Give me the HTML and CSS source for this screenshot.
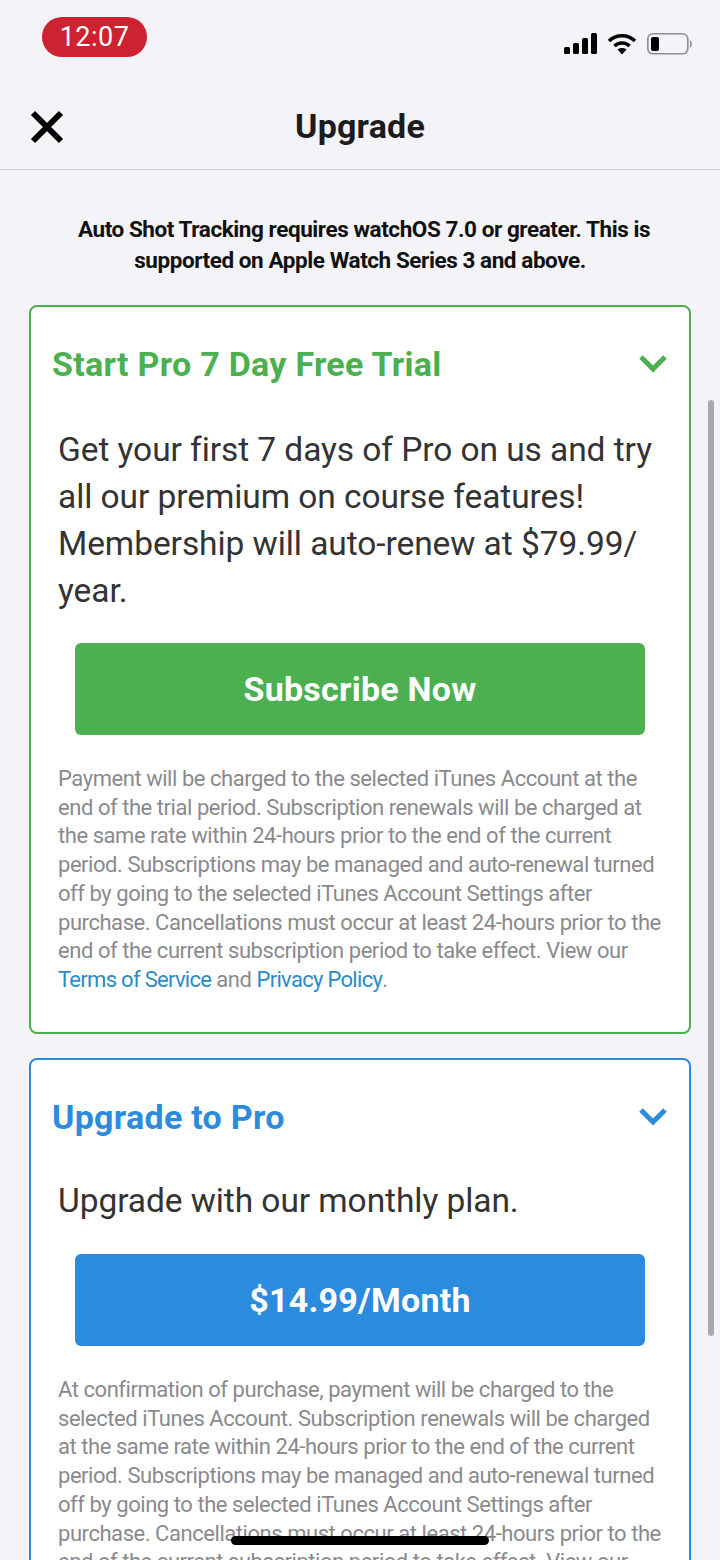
FILE: index.html
```html
<!DOCTYPE html>
<html>
<head>
  <title>Upgrade</title>
  <link rel="stylesheet" href="styles.css">
</head>
<body>
  <div class="status-bar">
    <span class="time">12:07</span>
    <div class="status-icons">
      <svg width="33" height="22" viewBox="0 0 33 22"><rect x="0" y="14" width="6" height="7" rx="1.5"/><rect x="9" y="10" width="6" height="11" rx="1.5"/><rect x="18" y="5" width="6" height="16" rx="1.5"/><rect x="27" y="0" width="6" height="21" rx="1.500"/></svg>
      <svg width="30" height="22" viewBox="0 0 30 22"><path class="wifi" d="M2 8 C9 1 21 1 28 8"/><path class="wifi" d="M7.500 13 C11.500 9 18.500 9 22.500 13"/><path d="M15 21.500 L10.500 16.500 C13 14.500 17 14.500 19.500 16.500 Z"/></svg>
      <svg width="45" height="22" viewBox="0 0 45 22"><rect class="batt" x="0.800" y="0.800" width="40" height="20" rx="5"/><rect x="4" y="4" width="8" height="14" rx="2"/><path class="batt-cap" d="M43 8 C44.500 9 44.500 13 43 14"/></svg>
    </div>
  </div>

  <header class="top-bar">
    <svg class="close-icon" width="34" height="34" viewBox="0 0 34 34"><path d="M3 3 L31 31 M31 3 L3 31"/></svg>
    <h1>Upgrade</h1>
  </header>

  <main class="content">
    <p class="intro"><span class="intro-first">Auto Shot Tracking requires watchOS 7.0 or greater. This is</span><br>supported on Apple Watch Series 3 and above.</p>

    <section class="card card-green">
      <div class="card-head">
        <h2>Start Pro 7 Day Free Trial</h2>
        <svg class="chevron" width="30" height="20" viewBox="0 0 30 20"><path d="M3 3 L15 15 L27 3"/></svg>
      </div>
      <p class="lead">Get your first 7 days of Pro on us and try<br>all our premium on course features!<br>Membership will auto-renew at $79.99/<br>year.</p>
      <button class="cta">Subscribe Now</button>
      <p class="fine">Payment will be charged to the selected iTunes Account at the<br>end of the trial period. Subscription renewals will be charged at<br>the same rate within 24-hours prior to the end of the current<br>period. Subscriptions may be managed and auto-renewal turned<br>off by going to the selected iTunes Account Settings after<br>purchase. Cancellations must occur at least 24-hours prior to the<br>end of the current subscription period to take effect. View our<br><a>Terms of Service</a> and <a>Privacy Policy</a>.</p>
    </section>

    <section class="card card-blue">
      <div class="card-head">
        <h2>Upgrade to Pro</h2>
        <svg class="chevron" width="30" height="20" viewBox="0 0 30 20"><path d="M3 3 L15 15 L27 3"/></svg>
      </div>
      <p class="lead">Upgrade with our monthly plan.</p>
      <button class="cta">$14.99/Month</button>
      <p class="fine">At confirmation of purchase, payment will be charged to the<br>selected iTunes Account. Subscription renewals will be charged<br>at the same rate within 24-hours prior to the end of the current<br>period. Subscriptions may be managed and auto-renewal turned<br>off by going to the selected iTunes Account Settings after<br>purchase. Cancellations must occur at least 24-hours prior to the<br>end of the current subscription period to take effect. View our</p>
    </section>
  </main>

  <div class="scrollbar"></div>
  <div class="home-bar"></div>
</body>
</html>
```

FILE: styles.css
```css
html, body {
  margin: 0;
  height: 1560px;
  overflow: hidden;
}
body {
  position: relative;
  font-family: "Roboto", "Noto Sans", sans-serif;
  background-color: #f4f3f8;
  color: #1c1c1e;
}
.status-bar {
  height: 85px;
  display: flex;
  justify-content: space-between;
  align-items: flex-start;
  padding: 17px 28px 0 42px;
  box-sizing: border-box;
}
.time {
  width: 105px;
  height: 40px;
  line-height: 40px;
  text-align: center;
  border-radius: 20px;
  background-color: #cf2230;
  color: #fff;
  font-size: 27px;
  letter-spacing: 0.5px;
}
.status-icons {
  display: flex;
  gap: 10px;
  margin-top: 16px;
  fill: #000;
}
.wifi {
  fill: none;
  stroke: #000;
  stroke-width: 3.5;
}
.batt {
  fill: none;
  stroke: #8e8e93;
  stroke-width: 1.6;
}
.batt-cap {
  fill: none;
  stroke: #8e8e93;
  stroke-width: 1.6;
}
.top-bar {
  height: 84px;
  display: flex;
  align-items: center;
  justify-content: center;
  position: relative;
  border-bottom: 1px solid #cfcfd4;
}
.top-bar h1 {
  margin: 0 0 2px;
  font-size: 34px;
  font-weight: 700;
  letter-spacing: 0.2px;
}
.close-icon {
  position: absolute;
  left: 30px;
  top: 25px;
  fill: none;
  stroke: #000;
  stroke-width: 6;
}
.content {
  padding: 0 29px;
}
.intro {
  margin: 44px 0 29px;
  font-size: 22.500px;
  line-height: 31px;
  font-weight: 700;
  letter-spacing: -0.43px;
  text-align: center;
  color: #111;
}
.intro-first {
  margin-left: 8px;
}
.card {
  background-color: #fff;
  border: 2px solid;
  border-radius: 8px;
  padding: 0 21px 0 27px;
  margin-bottom: 24px;
}
.card-green {
  height: 725px;
  border-color: #4caf50;
}
.card-blue {
  border-color: #2b8bdc;
}
.card-green h2,
.card-green .chevron {
  color: #4caf50;
  stroke: #4caf50;
}
.card-blue h2,
.card-blue .chevron {
  color: #2b8bdc;
  stroke: #2b8bdc;
}
.card-head {
  display: flex;
  justify-content: space-between;
  align-items: center;
  height: 113px;
  margin-left: -6px;
}
.card-head h2 {
  margin: 0;
  font-size: 34px;
  font-weight: 700;
  letter-spacing: 0.28px;
}
.chevron {
  fill: none;
  stroke-width: 5;
}
.lead {
  margin: 6px 0 0;
  font-size: 33.500px;
  line-height: 47px;
  letter-spacing: -0.07px;
  color: #333;
  white-space: nowrap;
}
.cta {
  display: block;
  width: 570px;
  height: 92px;
  margin: 29px 0 30px 17px;
  border: none;
  border-radius: 6px;
  color: #fff;
  font-family: inherit;
  font-size: 34px;
  font-weight: 700;
  letter-spacing: 0.25px;
}
.card-green .cta {
  background-color: #4caf50;
}
.card-blue .cta {
  background-color: #2b8bdc;
  margin-top: 30px;
}
.card-blue .lead {
  margin-top: 4px;
}
.fine {
  margin: 1px 0 0;
  font-size: 22px;
  line-height: 28.700px;
  letter-spacing: -0.45px;
  color: #8a8a8e;
  white-space: nowrap;
}
.fine a {
  color: #2b8bc4;
  letter-spacing: -0.7px;
}
.scrollbar {
  position: absolute;
  left: 708px;
  top: 400px;
  width: 6px;
  height: 936px;
  border-radius: 3px;
  background-color: #a9a9ad;
}
.home-bar {
  position: absolute;
  left: 231px;
  top: 1536px;
  width: 258px;
  height: 9px;
  border-radius: 5px;
  background-color: #000;
}
```
